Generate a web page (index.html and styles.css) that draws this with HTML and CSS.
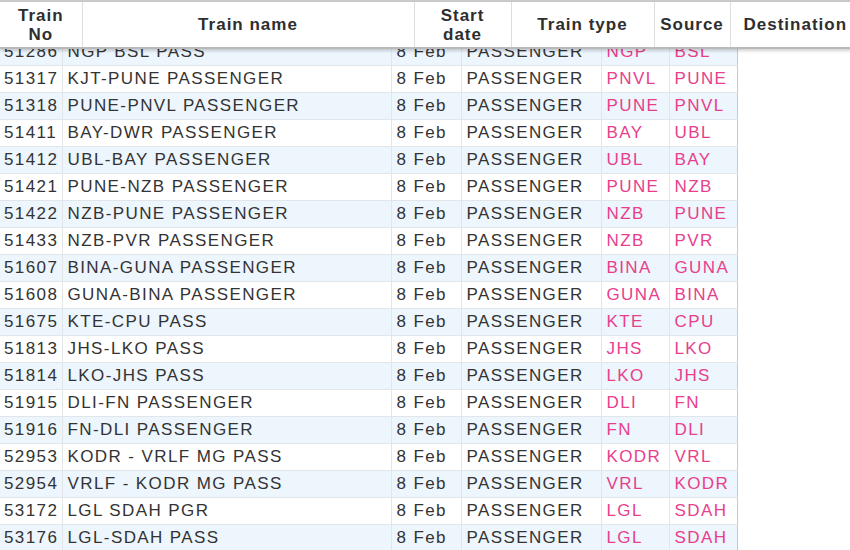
FILE: index.html
```html
<!DOCTYPE html>
<html>
<head>
<meta charset="utf-8">
<link rel="stylesheet" href="styles.css">
</head>
<body>
<div class="frame">
  <table class="head">
    <colgroup>
      <col class="h1"><col class="h2"><col class="h3"><col class="h4"><col class="h5"><col class="h6">
    </colgroup>
    <tr>
      <th>Train<br>No</th>
      <th>Train name</th>
      <th>Start<br>date</th>
      <th>Train type</th>
      <th>Source</th>
      <th>Destination</th>
    </tr>
  </table>
  <table class="grid">
    <colgroup>
      <col class="c1"><col class="c2"><col class="c3"><col class="c4"><col class="c5"><col class="c6">
    </colgroup>
    <tr><td>51286</td><td>NGP BSL PASS</td><td>8 Feb</td><td>PASSENGER</td><td class="st">NGP</td><td class="st">BSL</td></tr>
    <tr><td>51317</td><td>KJT-PUNE PASSENGER</td><td>8 Feb</td><td>PASSENGER</td><td class="st">PNVL</td><td class="st">PUNE</td></tr>
    <tr><td>51318</td><td>PUNE-PNVL PASSENGER</td><td>8 Feb</td><td>PASSENGER</td><td class="st">PUNE</td><td class="st">PNVL</td></tr>
    <tr><td>51411</td><td>BAY-DWR PASSENGER</td><td>8 Feb</td><td>PASSENGER</td><td class="st">BAY</td><td class="st">UBL</td></tr>
    <tr><td>51412</td><td>UBL-BAY PASSENGER</td><td>8 Feb</td><td>PASSENGER</td><td class="st">UBL</td><td class="st">BAY</td></tr>
    <tr><td>51421</td><td>PUNE-NZB PASSENGER</td><td>8 Feb</td><td>PASSENGER</td><td class="st">PUNE</td><td class="st">NZB</td></tr>
    <tr><td>51422</td><td>NZB-PUNE PASSENGER</td><td>8 Feb</td><td>PASSENGER</td><td class="st">NZB</td><td class="st">PUNE</td></tr>
    <tr><td>51433</td><td>NZB-PVR PASSENGER</td><td>8 Feb</td><td>PASSENGER</td><td class="st">NZB</td><td class="st">PVR</td></tr>
    <tr><td>51607</td><td>BINA-GUNA PASSENGER</td><td>8 Feb</td><td>PASSENGER</td><td class="st">BINA</td><td class="st">GUNA</td></tr>
    <tr><td>51608</td><td>GUNA-BINA PASSENGER</td><td>8 Feb</td><td>PASSENGER</td><td class="st">GUNA</td><td class="st">BINA</td></tr>
    <tr><td>51675</td><td>KTE-CPU PASS</td><td>8 Feb</td><td>PASSENGER</td><td class="st">KTE</td><td class="st">CPU</td></tr>
    <tr><td>51813</td><td>JHS-LKO PASS</td><td>8 Feb</td><td>PASSENGER</td><td class="st">JHS</td><td class="st">LKO</td></tr>
    <tr><td>51814</td><td>LKO-JHS PASS</td><td>8 Feb</td><td>PASSENGER</td><td class="st">LKO</td><td class="st">JHS</td></tr>
    <tr><td>51915</td><td>DLI-FN PASSENGER</td><td>8 Feb</td><td>PASSENGER</td><td class="st">DLI</td><td class="st">FN</td></tr>
    <tr><td>51916</td><td>FN-DLI PASSENGER</td><td>8 Feb</td><td>PASSENGER</td><td class="st">FN</td><td class="st">DLI</td></tr>
    <tr><td>52953</td><td>KODR - VRLF MG PASS</td><td>8 Feb</td><td>PASSENGER</td><td class="st">KODR</td><td class="st">VRL</td></tr>
    <tr><td>52954</td><td>VRLF - KODR MG PASS</td><td>8 Feb</td><td>PASSENGER</td><td class="st">VRL</td><td class="st">KODR</td></tr>
    <tr><td>53172</td><td>LGL SDAH PGR</td><td>8 Feb</td><td>PASSENGER</td><td class="st">LGL</td><td class="st">SDAH</td></tr>
    <tr><td>53176</td><td>LGL-SDAH PASS</td><td>8 Feb</td><td>PASSENGER</td><td class="st">LGL</td><td class="st">SDAH</td></tr>
  </table>
</div>
</body>
</html>
```

FILE: styles.css
```css
html, body {
  margin: 0;
  padding: 0;
  background: #ffffff;
}

.frame {
  position: relative;
  width: 850px;
  height: 550px;
  overflow: hidden;
  font-family: "Liberation Sans", Arial, sans-serif;
  font-size: 17px;
  letter-spacing: 1px;
  color: #2b2b2b;
}

.head {
  position: absolute;
  top: 0;
  left: 0;
  z-index: 2;
  width: 860px;
  table-layout: fixed;
  border-collapse: collapse;
  background: #ffffff;
  border-top: 2px solid #c9c9c9;
  border-bottom: 2px solid #b9b9b9;
  box-shadow: 0 2px 3px rgba(0, 0, 0, 0.18);
}

.head th {
  height: 45px;
  padding: 0;
  font-weight: bold;
  line-height: 19px;
  text-align: center;
  vertical-align: middle;
  border-left: 1px solid #dedede;
  color: #2e2e2e;
}

.head th:first-child {
  border-left: none;
}

.h1 { width: 82px; }
.h2 { width: 332px; }
.h3 { width: 97px; }
.h4 { width: 143px; }
.h5 { width: 76px; }
.h6 { width: 130px; }

.grid {
  margin-top: 39px;
  width: 737px;
  table-layout: fixed;
  border-collapse: collapse;
  border-right: 1px solid #c8c8c8;
  letter-spacing: 1.4px;
}

.grid td {
  height: 26px;
  padding: 0 0 0 5px;
  line-height: 26px;
  white-space: nowrap;
  overflow: hidden;
  border: 1px solid #e2e6ea;
  border-top: none;
  color: #333333;
}

.grid td:first-child {
  border-left: none;
  padding-left: 4px;
}

.grid td:last-child {
  border-right: 1px solid #c8c8c8;
}

.grid tr:nth-child(odd) td {
  background: #edf5fd;
}

.grid tr:nth-child(even) td {
  background: #ffffff;
}

.grid td.st {
  color: #e83e8c;
}

.c1 { width: 62px; }
.c2 { width: 329px; }
.c3 { width: 70px; }
.c4 { width: 140px; }
.c5 { width: 68px; }
.c6 { width: 68px; }
```
